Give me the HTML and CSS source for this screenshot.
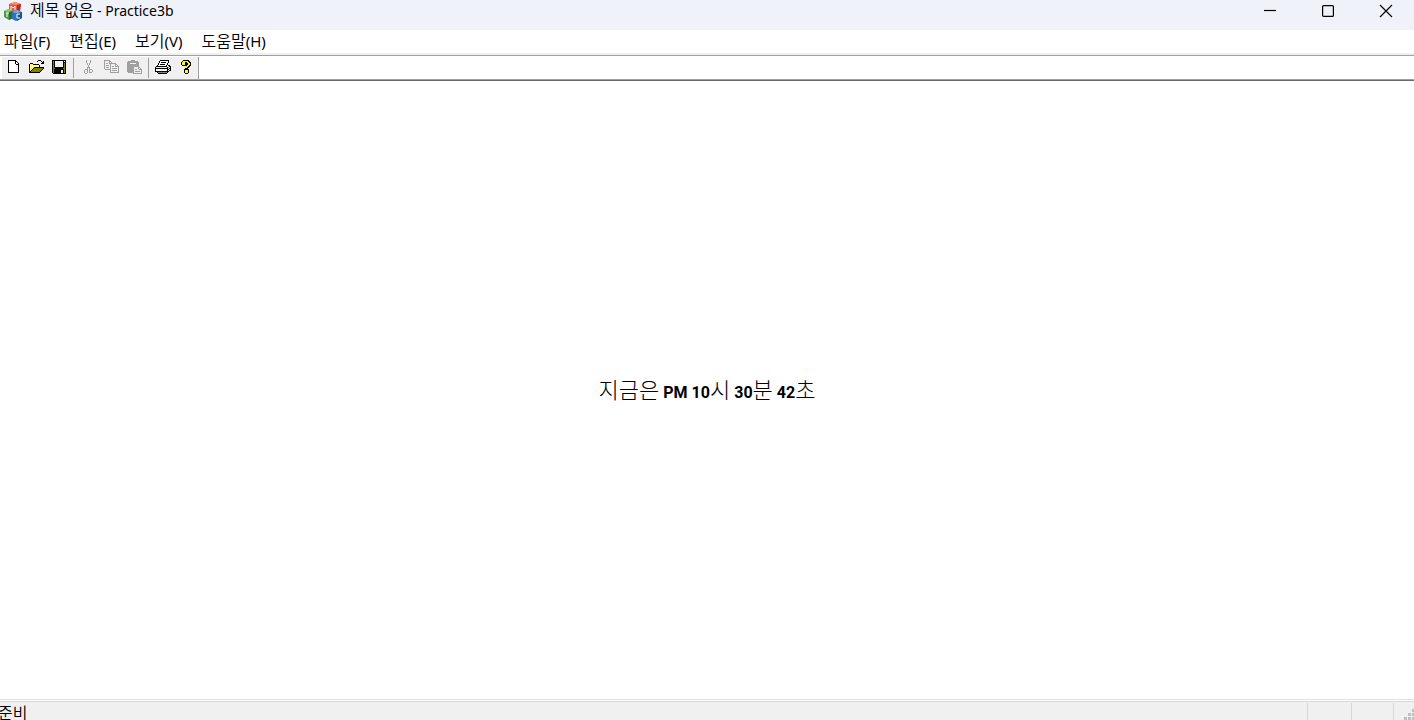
FILE: index.html
```html
<!DOCTYPE html>
<html lang="ko">
<head>
  <meta charset="UTF-8">
  <meta name="viewport" content="width=device-width, initial-scale=1.0">
  <title>제목 없음 - Practice3b</title>
  <link rel="stylesheet" href="styles.css">
</head>
<body>
  <header class="titlebar">
    <svg class="app-icon" viewBox="0 0 20 20" aria-hidden="true">
      <path fill="#e8553c" d="M6 3l6-2 6 2-1 7-5 2-6-2z"/>
      <path fill="#f58d75" d="M6 3l6-2 6 2-5 1z"/>
      <path fill="#b92c1d" d="M14 4l4-1-1 7-3 1z"/>
      <path fill="#4c9a42" d="M1 10l5-2 4 2v7l-4 2-5-3z"/>
      <path fill="#8cc77c" d="M1 10l5-2 4 2-5 1z"/>
      <path fill="#2d6c2b" d="M6 11l4-1v7l-4 2z"/>
      <path fill="#2d76bd" d="M9 11l5-2 5 2v6l-6 3-4-2z"/>
      <path fill="#75b4df" d="M9 11l5-2 5 2-5 1z"/>
      <path fill="#185494" d="M14 12l5-1v6l-5 3z"/>
      <path fill="none" stroke="#fff" d="M8 9V5l2 2 2-2v4M3 12h3M4 12v4M17 13h-3v4h3"/>
    </svg>
    <h1 class="title"><span class="ko">제목 없음</span> - Practice3b</h1>
    <div class="window-buttons">
      <button class="window-button" aria-label="최소화">
        <svg viewBox="0 0 14 14"><path d="M1 6.500h12"/></svg>
      </button>
      <button class="window-button" aria-label="최대화">
        <svg viewBox="0 0 14 14"><rect x="1.600" y="1.600" width="10.800" height="10.800" rx="1"/></svg>
      </button>
      <button class="window-button" aria-label="닫기">
        <svg viewBox="0 0 14 14"><path d="M1 1l12 12M13 1L1 13"/></svg>
      </button>
    </div>
  </header>

  <nav class="menubar">
    <button class="menu-item"><span class="ko">파일</span>(F)</button>
    <button class="menu-item"><span class="ko">편집</span>(E)</button>
    <button class="menu-item"><span class="ko">보기</span>(V)</button>
    <button class="menu-item"><span class="ko">도움말</span>(H)</button>
  </nav>

  <div class="toolbar-row">
    <div class="toolbar">
      <button class="tool" aria-label="새로 만들기">
        <svg viewBox="0 0 16 16">
          <path fill="#fff" d="M4 1h6l4 4v8H4z"/>
          <path d="M3 0h8v1H3zM3 1h1v12H3zM4 12h10v1H4zM13 4h1v8h-1zM10 1h1v3h-1zM11 1h1v1h-1zM12 2h1v1h-1zM13 3h1v1h-1zM11 4h2v1h-2z"/>
        </svg>
      </button>
      <button class="tool" aria-label="열기">
        <svg viewBox="0 0 16 16">
          <path fill="#ffff80" d="M2 4h3v1h6v2H6v1H5v1H4v1H3v1H2z"/>
          <path fill="#808000" d="M6 8h9v1h-1v1h-1v1h-1v1H3v-1h1v-1h1V9h1z"/>
          <path d="M10 0h3v1h-3zM9 1h1v1H9zM13 1h1v1h-1zM15 1h1v3h-3V3h1V2h1zM2 3h3v1H2zM1 4h1v9H1zM5 4h6v1H5zM11 5h1v2h-1zM6 7h10v1H6zM5 8h1v1H5zM4 9h1v1H4zM3 10h1v1H3zM2 11h1v1H2zM2 12h10v1H2zM15 8h1v1h-1zM14 9h1v1h-1zM13 10h1v1h-1zM12 11h1v1h-1z"/>
        </svg>
      </button>
      <button class="tool" aria-label="저장">
        <svg viewBox="0 0 16 16">
          <path d="M1 0h14v14H2v-1H1z"/>
          <path fill="#808000" d="M2 1h1v7h1v1h8V8h1V3h1v10h-1V9H3v4H2z"/>
          <path fill="#f0f0f0" d="M4 1h8v6H4zM13 1h1v1h-1zM10 10h2v3h-2z"/>
        </svg>
      </button>
      <span class="separator"></span>
      <button class="tool" aria-label="잘라내기" disabled>
        <svg viewBox="0 0 16 16">
          <path d="M6 0h1v3H6zM10 0h1v3h-1zM7 3h1v2H7zM9 3h1v2H9zM8 5h1v3H8zM7 7h1v2H7zM9 7h1v2H9zM6 9h2v4H7v-3H6zM5 9h2v1H5zM4 10h1v3H4zM5 13h2v1H5zM9 9h3v1h-2v3H9zM12 10h1v2h-1zM10 12h2v1h-2z"/>
        </svg>
      </button>
      <button class="tool" aria-label="복사" disabled>
        <svg viewBox="0 0 16 16">
          <path d="M1 0h6v1H1zM1 1h1v8H1zM2 9h5v1H2zM6 1h1v3H6zM7 1h1v1H7zM8 2h1v1H8zM3 3h2v1H3zM3 5h3v1H3zM3 7h3v1H3zM7 3h6v1H7zM7 4h1v8H7zM7 12h9v1H7zM12 4h1v3h-1zM13 4h1v1h-1zM14 5h1v1h-1zM15 6h1v6h-1zM13 6h2v1h-2zM9 6h2v1H9zM9 8h5v1H9zM9 10h5v1H9z"/>
        </svg>
      </button>
      <button class="tool" aria-label="붙여넣기" disabled>
        <svg viewBox="0 0 16 16">
          <path d="M2 1h3V0h4v1h3v1h1v4H7v7H2v-1H1V2h1z"/>
          <path fill="#f0f0f0" d="M4 3h6v1H4z"/>
          <path d="M7 6h6v1H7zM7 7h1v6H7zM7 13h9v1H7zM12 7h1v2h-1zM13 7h1v1h-1zM14 8h1v1h-1zM15 9h1v4h-1zM13 9h2v1h-2zM9 9h2v1H9zM9 11h5v1H9z"/>
        </svg>
      </button>
      <span class="separator"></span>
      <button class="tool" aria-label="인쇄">
        <svg viewBox="0 0 16 16">
          <path fill="#fff" d="M5 1h8v1h-1v3h-1v2H3V5h1V3h1zM2 8h10v4H1V8z"/>
          <path d="M5 0h9v1H5zM4 1h1v2H4zM3 3h1v2H3zM2 5h1v1H2zM13 1h1v2h-1zM12 3h1v2h-1zM11 5h1v1h-1zM6 2h5v1H6zM5 4h5v1H5zM1 6h11v1H1zM0 7h1v5H0zM1 8h11v1H1zM1 11h11v1H1zM12 7h1v5h-1zM13 5h2v1h-2zM14 6h1v1h-1zM15 6h1v5h-1zM14 8h1v1h-1zM13 9h1v1h-1zM14 10h1v1h-1zM13 11h1v1h-1zM2 12h1v1H2zM3 13h9v1H3zM12 12h1v1h-1z"/>
          <path fill="#ffff00" d="M7 9h3v1H7z"/>
          <path fill="#808080" d="M3 12h9v1H3zM13 7h1v1h-1z"/>
        </svg>
      </button>
      <button class="tool" aria-label="도움말">
        <svg viewBox="0 0 16 16">
          <path d="M5 0h6v1h1v1h1v4h-1v1h-1v1h-1v1h1v4h-1v1H7v-1H6V9h1V6h1V5h1V3H7v3H4V5H3V2h1V1h1z"/>
          <path fill="#ffff00" d="M5 1h5v1h1v1h1v2h-1v1h-1v1H9v1H7V6h1V5h1V4h1V3H9V2H7v3H4V2h1zM7 10h3v3H7z"/>
          <path d="M7 2h2v1h1v2H9v1H7z"/>
        </svg>
      </button>
    </div>
  </div>

  <main class="view">
    <p class="clock"><span class="hangul">지금은</span> PM 10<span class="hangul">시</span> 30<span class="hangul">분</span> 42<span class="hangul">초</span></p>
  </main>

  <footer class="statusbar">
    <span class="status-text"><span class="ko">준비</span></span>
    <span class="pane pane-caps"></span>
    <span class="pane pane-num"></span>
    <span class="pane pane-scroll">
      <svg class="grip" viewBox="0 0 10 11" aria-hidden="true">
        <path d="M8 0h2v3H8zM4 4h3v3H4zM8 4h2v3H8zM0 8h3v3H0zM4 8h3v3H4zM8 8h2v3H8z"/>
      </svg>
    </span>
  </footer>
</body>
</html>
```
FILE: styles.css
```css
* {
  box-sizing: border-box;
}
body {
  display: flex;
  flex-direction: column;
  height: 100vh;
  margin: 0;
  overflow: hidden;
  background-color: #fff;
  color: #000;
  font-family: "Noto Sans", "Noto Sans CJK KR", sans-serif;
  font-size: 15px;
}
button {
  padding: 0;
  border: none;
  background: none;
  color: inherit;
  font: inherit;
}
.ko {
  font-family: "Noto Sans CJK KR", sans-serif;
  font-size: 16px;
  font-weight: 350;
  line-height: 1;
}

/* title bar */
.titlebar {
  display: flex;
  flex: none;
  align-items: flex-start;
  height: 30px;
  padding-left: 3px;
  background-color: #f0f2f9;
}
.app-icon {
  width: 20px;
  height: 20px;
  margin-top: 1px;
}
.title {
  flex: 1;
  margin: 0 0 0 7px;
  font-size: 14px;
  font-weight: 400;
  line-height: 22px;
}
.window-buttons {
  display: flex;
  gap: 2px;
}
.window-button {
  display: flex;
  align-items: center;
  justify-content: center;
  width: 56px;
  height: 22px;
}
.window-button svg {
  width: 14px;
  height: 14px;
  fill: none;
  stroke: #000;
  stroke-width: 1.2;
}

/* menu */
.menubar {
  display: flex;
  flex: none;
  gap: 19px;
  height: 25px;
  padding-left: 4px;
  border-bottom: 2px solid #f0f0f0;
}
.menu-item {
  line-height: 23px;
}

/* toolbar */
.toolbar-row {
  display: flex;
  flex: none;
  height: 26px;
  padding: 1px 0 0 2px;
  border-top: 1px solid #a0a0a0;
  border-bottom: 1px solid #696969;
  box-shadow: inset 0 -1px #a0a0a0;
}
.toolbar {
  display: flex;
  margin-bottom: 1px;
  border-right: 1px solid #a0a0a0;
  background-color: #f0f0f0;
}
.tool {
  width: 23px;
  height: 22px;
}
.tool svg {
  display: block;
  width: 16px;
  height: 16px;
  margin: 3px;
  fill: #000;
  shape-rendering: crispEdges;
}
.tool:disabled svg {
  fill: #a0a0a0;
}
.separator {
  width: 6px;
  margin: 1px 0;
  border-left: 2px solid #f0f0f0;
  background: linear-gradient(to right, #a0a0a0 1px, #f0f0f0 1px);
}

/* document view */
.view {
  display: flex;
  flex: 1;
  align-items: center;
  justify-content: center;
}
.clock {
  margin: 0;
  font-family: Roboto, "Noto Sans CJK KR", sans-serif;
  font-size: 16px;
  font-weight: 700;
  line-height: 20px;
}
.hangul {
  font-family: "Noto Sans CJK KR", sans-serif;
  font-size: 22px;
  font-weight: 300;
}

/* status bar */
.statusbar {
  display: flex;
  flex: none;
  height: 21px;
  border-top: 1px solid #e0e0e0;
  background: linear-gradient(#fff 1px, #d7d7d7 1px, #d7d7d7 2px, #f0f0f0 2px);
}
.status-text {
  flex: 1;
  margin-left: -2px;
  padding-top: 3px;
  line-height: 20px;
}
.pane {
  margin-top: 3px;
  border-left: 1px solid #d7d7d7;
}
.pane-caps {
  width: 44px;
}
.pane-num {
  width: 42px;
}
.pane-scroll {
  display: flex;
  align-items: flex-end;
  justify-content: flex-end;
  width: 21px;
}
.grip {
  width: 10px;
  height: 11px;
  fill: #bfbfbf;
}
```
